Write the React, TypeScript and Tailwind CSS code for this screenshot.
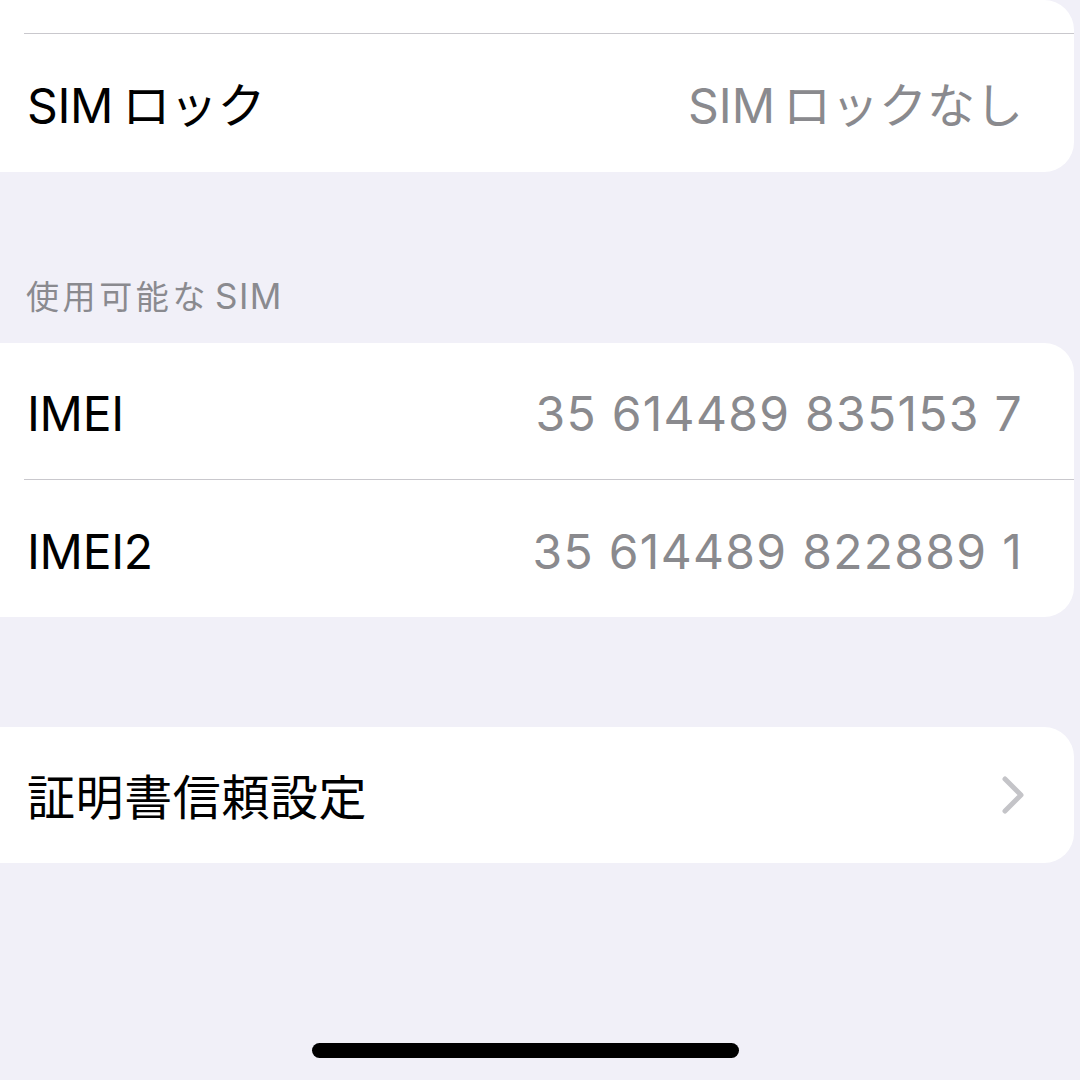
import React from "react";

const font = { fontFamily: 'Inter, "Noto Sans CJK JP", sans-serif' };

function Separator() {
  return <div className="ml-[24px] h-px bg-[#c9c8cd]" />;
}

function SimText({ rest, gap }: { rest: string; gap: string }) {
  return (
    <>
      <span>SIM</span>
      <span className={gap}>{rest}</span>
    </>
  );
}

function Row({
  label,
  value,
  chevron,
  h,
  valueTracking = "tracking-[1.3px]",
}: {
  label: React.ReactNode;
  value?: React.ReactNode;
  chevron?: boolean;
  h: string;
  valueTracking?: string;
}) {
  return (
    <div className={`flex items-center justify-between pl-[27px] pr-[51px] pt-[6px] ${h}`}>
      <span className="flex text-[48px] leading-none text-black tracking-[-0.3px]">{label}</span>
      {value && <span className={`flex text-[48px] leading-none text-[#8a8a8e] ${valueTracking}`}>{value}</span>}
      {chevron && (
        <svg width="26" height="40" viewBox="0 0 26 40" className="mr-[-3px] mt-[-6px]">
          <path d="M5 4 L21 20 L5 36" fill="none" stroke="#c4c4c8" strokeWidth="5" strokeLinecap="round" strokeLinejoin="round" />
        </svg>
      )}
    </div>
  );
}

export default function App() {
  return (
    <div className="w-[1080px] h-[1080px] bg-[#f1f0f8] overflow-hidden flex flex-col" style={font}>
      <div className="w-[1074px] bg-white rounded-r-[30px] h-[172px] flex flex-col">
        <div className="h-[33px]" />
        <Separator />
        <Row
          label={<SimText rest="ロック" gap="ml-[9px]" />}
          value={<SimText rest="ロックなし" gap="ml-[8px]" />}
          valueTracking="tracking-[0px]"
          h="h-[138px]"
        />
      </div>
      <div className="h-[171px] flex items-end pb-[26px] pl-[26px]">
        <span className="flex items-baseline leading-[40px] text-[#8a8a8f]">
          <span className="text-[33px] tracking-[3.6px]">使用可能な</span>
          <span className="ml-[6px] text-[35px] tracking-[1.5px]">SIM</span>
        </span>
      </div>
      <div className="w-[1074px] bg-white rounded-r-[30px] flex flex-col">
        <Row label="IMEI" value="35 614489 835153 7" h="h-[136px]" />
        <Separator />
        <Row label="IMEI2" value="35 614489 822889 1" h="h-[137px]" />
      </div>
      <div className="h-[110px]" />
      <div className="w-[1074px] bg-white rounded-r-[30px] flex flex-col">
        <Row label={<span className="tracking-[0.6px]">証明書信頼設定</span>} chevron h="h-[136px]" />
      </div>
      <div className="h-[180px]" />
      <div className="ml-[312px] w-[427px] h-[15px] rounded-full bg-black" />
    </div>
  );
}
